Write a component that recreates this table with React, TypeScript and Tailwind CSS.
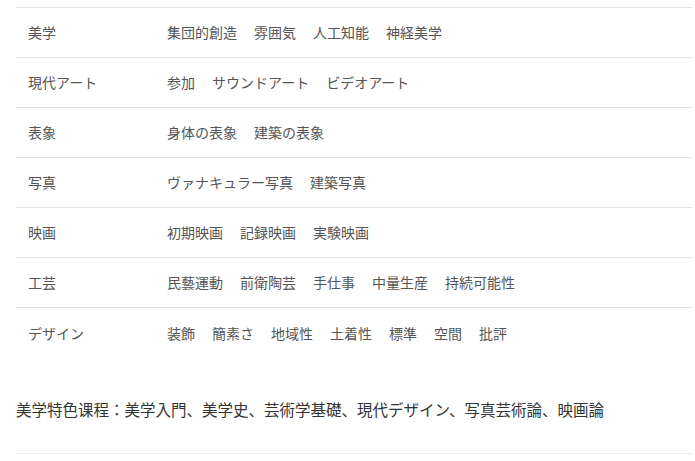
import React from 'react';

interface Row {
  label: string;
  items: string[];
}

const rows: Row[] = [
  { label: '美学', items: ['集団的創造', '雰囲気', '人工知能', '神経美学'] },
  { label: '現代アート', items: ['参加', 'サウンドアート', 'ビデオアート'] },
  { label: '表象', items: ['身体の表象', '建築の表象'] },
  { label: '写真', items: ['ヴァナキュラー写真', '建築写真'] },
  { label: '映画', items: ['初期映画', '記録映画', '実験映画'] },
  { label: '工芸', items: ['民藝運動', '前衛陶芸', '手仕事', '中量生産', '持続可能性'] },
  { label: 'デザイン', items: ['装飾', '簡素さ', '地域性', '土着性', '標準', '空間', '批評'] }
];

const App: React.FC = () => {
  return (
    <div
      className="w-[695px] h-[461px] bg-white pl-4 pr-[3px] pt-[7px] overflow-hidden"
      style={{ fontFamily: '"Noto Sans CJK JP", "Noto Sans", sans-serif' }}
    >
      {/* Table */}
      <div className="border-t border-[#e5e5e5]">
        {rows.map((row, i) => (
          <div
            key={row.label}
            className={`flex items-center h-[50px] text-[14px] text-[#555] ${i < rows.length - 1 ? 'border-b border-[#e5e5e5]' : ''}`}
          >
            <div className="w-[151px] pl-3 shrink-0">{row.label}</div>
            <div className="flex gap-[17px]">
              {row.items.map(item => (
                <span key={item}>{item}</span>
              ))}
            </div>
          </div>
        ))}
      </div>

      {/* Courses */}
      <div className="pt-[40px] pb-[33px] text-[15.5px] leading-[22px] text-[#333]">
        美学特色课程：美学入門、美学史、芸術学基礎、現代デザイン、写真芸術論、映画論
      </div>
      <div className="border-t border-[#eee]" />
    </div>
  );
};

export default App;
